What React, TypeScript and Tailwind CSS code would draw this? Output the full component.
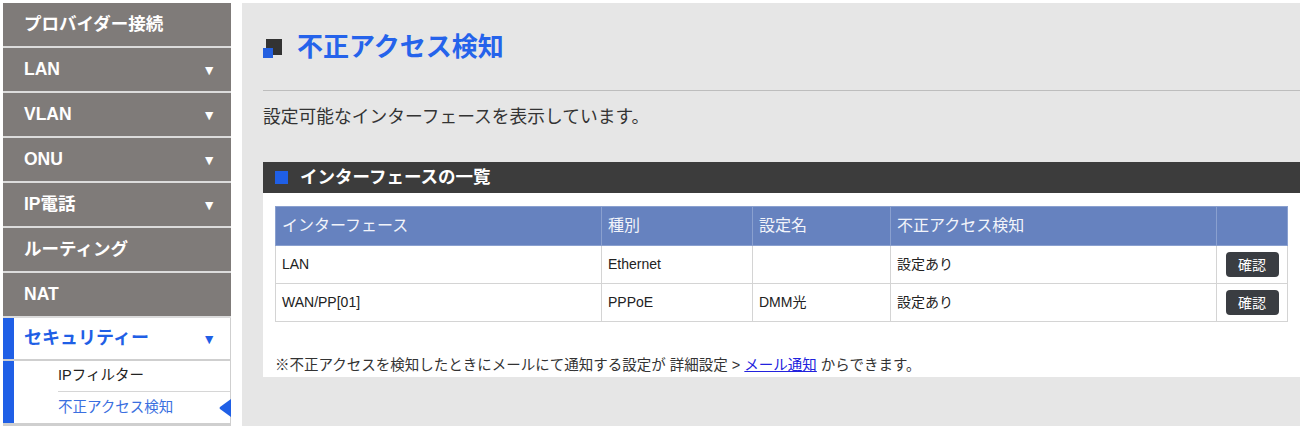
import React from 'react'

const jp = { fontFamily: '"Liberation Sans", "Noto Sans CJK JP", sans-serif' }

const menu = [
  { label: 'プロバイダー接続', arrow: false },
  { label: 'LAN', arrow: true },
  { label: 'VLAN', arrow: true },
  { label: 'ONU', arrow: true },
  { label: 'IP電話', arrow: true },
  { label: 'ルーティング', arrow: false },
  { label: 'NAT', arrow: false },
]

const rows = [
  { name: 'LAN', kind: 'Ethernet', setting: '', status: '設定あり' },
  { name: 'WAN/PP[01]', kind: 'PPPoE', setting: 'DMM光', status: '設定あり' },
]

function Sidebar() {
  return (
    <div className="w-[228px] ml-[3px] mt-[3px] flex flex-col shrink-0">
      {menu.map((m) => (
        <div
          key={m.label}
          className="h-[45px] bg-[#7f7b79] border-b-2 border-[#dcdcdc] flex items-center justify-between pl-[21px] pr-[15px] text-white font-bold text-[17.5px]"
        >
          <span>{m.label}</span>
          {m.arrow && <span className="text-[14px] leading-none">▼</span>}
        </div>
      ))}
      <div className="flex border-r border-[#cfcfcf]">
        <div className="w-[11px] bg-[#1f5fe6] shrink-0" />
        <div className="flex-1 bg-white">
          <div className="h-[43px] flex items-center justify-between pr-[14px] border-b-2 border-[#cfcfcf] -ml-[11px] pl-[21px] text-[#1f5fe6] font-bold text-[18px]">
            <span>セキュリティー</span>
            <span className="text-[14px] leading-none">▼</span>
          </div>
          <div className="pl-[44px]">
            <div className="h-[31px] flex items-center border-b border-[#d6d6d6] text-[14.5px] text-[#222]">
              IPフィルター
            </div>
            <div className="h-[31px] flex items-center justify-between text-[14.5px] text-[#3a6fe0]">
              <span>不正アクセス検知</span>
              <svg width="12" height="18" viewBox="0 0 12 18" className="-mr-[1px]">
                <path d="M12 0 L12 18 L1 10 Q0 9 1 8 Z" fill="#1f5fe6" />
              </svg>
            </div>
          </div>
        </div>
      </div>
      <div className="h-[3px] bg-[#cfcfcf]" />
    </div>
  )
}

export default function App() {
  return (
    <div className="w-[1300px] h-[426px] bg-white flex overflow-hidden" style={jp}>
      <Sidebar />
      <div className="flex-1 ml-[11px] mt-[3px] bg-[#e6e6e6] pl-[21px]">
        <div className="h-[87px] flex items-center">
          <div className="relative w-[20px] h-[20px] mt-[4px]">
            <div className="absolute left-[3px] top-0 w-[16px] h-[16px] bg-[#333]" />
            <div className="absolute left-0 top-[9px] w-[10px] h-[10px] bg-[#2460e0]" />
          </div>
          <h1 className="ml-[14px] text-[26px] font-bold text-[#2563eb] leading-none">不正アクセス検知</h1>
        </div>
        <div className="border-t border-[#bdbdbd]" />
        <p className="mt-[14px] text-[17.75px] text-[#333] leading-[24px]">設定可能なインターフェースを表示しています。</p>
        <div className="mt-[33px] bg-white">
          <div className="h-[31px] bg-[#3c3c3c] flex items-center pl-[12px]">
            <div className="w-[13px] h-[13px] bg-[#1f5fe6]" />
            <span className="ml-[12px] text-white font-bold text-[17.5px]">インターフェースの一覧</span>
          </div>
          <div className="px-[12px] pt-[13px]">
            <table className="w-[1013px] border-collapse border border-[#555] text-[14px] text-[#222]">
              <thead>
                <tr className="bg-[#6682bf] text-[#f2f4fa] text-[16px] h-[39px] text-left">
                  <th className="font-normal pl-[6px] w-[326px] border border-[#8aa0cf]">インターフェース</th>
                  <th className="font-normal pl-[6px] w-[151px] border border-[#8aa0cf]">種別</th>
                  <th className="font-normal pl-[6px] w-[138px] border border-[#8aa0cf]">設定名</th>
                  <th className="font-normal pl-[6px] w-[326px] border border-[#8aa0cf]">不正アクセス検知</th>
                  <th className="font-normal border border-[#8aa0cf]" />
                </tr>
              </thead>
              <tbody>
                {rows.map((r) => (
                  <tr key={r.name} className="h-[38px] bg-white">
                    <td className="pl-[6px] border border-[#d4d4d4]">{r.name}</td>
                    <td className="pl-[6px] border border-[#d4d4d4]">{r.kind}</td>
                    <td className="pl-[6px] border border-[#d4d4d4]">{r.setting}</td>
                    <td className="pl-[6px] border border-[#d4d4d4]">{r.status}</td>
                    <td className="border border-[#d4d4d4] text-center">
                      <button className="w-[53px] h-[25px] rounded-[4px] bg-[#3a3d42] text-white text-[14px] leading-none">
                        確認
                      </button>
                    </td>
                  </tr>
                ))}
              </tbody>
            </table>
          </div>
          <p className="h-[55px] pl-[12px] pt-[34px] text-[14.5px] text-[#333] leading-[18px]">
            ※不正アクセスを検知したときにメールにて通知する設定が 詳細設定 &gt;{' '}
            <a className="text-[#2222dd] underline">メール通知</a> からできます。
          </p>
        </div>
      </div>
    </div>
  )
}
